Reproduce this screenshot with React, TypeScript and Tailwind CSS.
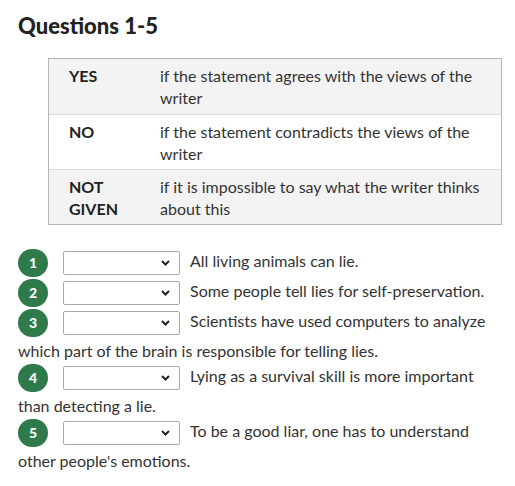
const rows = [
  { label: "YES", text: "if the statement agrees with the views of the writer", shade: true },
  { label: "NO", text: "if the statement contradicts the views of the writer", shade: false },
  { label: "NOT GIVEN", text: "if it is impossible to say what the writer thinks about this", shade: true },
];

const questions = [
  "All living animals can lie.",
  "Some people tell lies for self-preservation.",
  "Scientists have used computers to analyze which part of the brain is responsible for telling lies.",
  "Lying as a survival skill is more important than detecting a lie.",
  "To be a good liar, one has to understand other people's emotions.",
];

function Chevron() {
  return (
    <svg width="9" height="6" viewBox="0 0 9 6" className="pointer-events-none absolute right-[10px] top-[9px]">
      <path d="M1 1l3.5 3.5L8 1" fill="none" stroke="#222" strokeWidth="2" />
    </svg>
  );
}

function Question({ n, text }: { n: number; text: string }) {
  return (
    <div className="text-[16px] leading-[25px] text-[#333]">
      <span className="my-[1px] mr-[15px] inline-flex h-[28px] w-[30px] items-center justify-center rounded-full bg-[#2e7a4b] align-middle text-[14px] leading-none font-black text-white">
        {n}
      </span>
      <span className="relative mr-[10px] inline-block h-[24px] w-[117px] align-middle">
        <select className="h-full w-full appearance-none rounded-[2px] border border-[#a9a9a9] bg-white" defaultValue="">
          <option value=""></option>
          <option value="YES">YES</option>
          <option value="NO">NO</option>
          <option value="NOT GIVEN">NOT GIVEN</option>
        </select>
        <Chevron />
      </span>
      {text}
    </div>
  );
}

export default function App() {
  return (
    <div className="min-h-[486px] w-[515px] bg-white px-[18px] pt-[12px] font-['Lato',_'Open_Sans',_sans-serif] text-[#333]">
      <h2 className="text-[22px] font-black leading-[28px] text-[#222]">Questions 1-5</h2>
      <div className="ml-[30px] mr-[-5px] mt-[18px] border border-[#b5b5b5] text-[16px] leading-[22px]">
        {rows.map((r, i) => (
          <div
            key={r.label}
            className={`grid h-[55px] grid-cols-[111px_1fr] pt-[6px] ${r.shade ? "bg-[#f3f3f3]" : "bg-white"} ${
              i > 0 ? "border-t border-[#dcdcdc]" : ""
            }`}
          >
            <div className="box-content w-[70px] pl-[20px] font-bold text-[#222]">{r.label}</div>
            <div className="pr-[10px]">{r.text}</div>
          </div>
        ))}
      </div>
      <div className="mt-[23px]">
        {questions.map((q, i) => (
          <Question key={i} n={i + 1} text={q} />
        ))}
      </div>
    </div>
  );
}
